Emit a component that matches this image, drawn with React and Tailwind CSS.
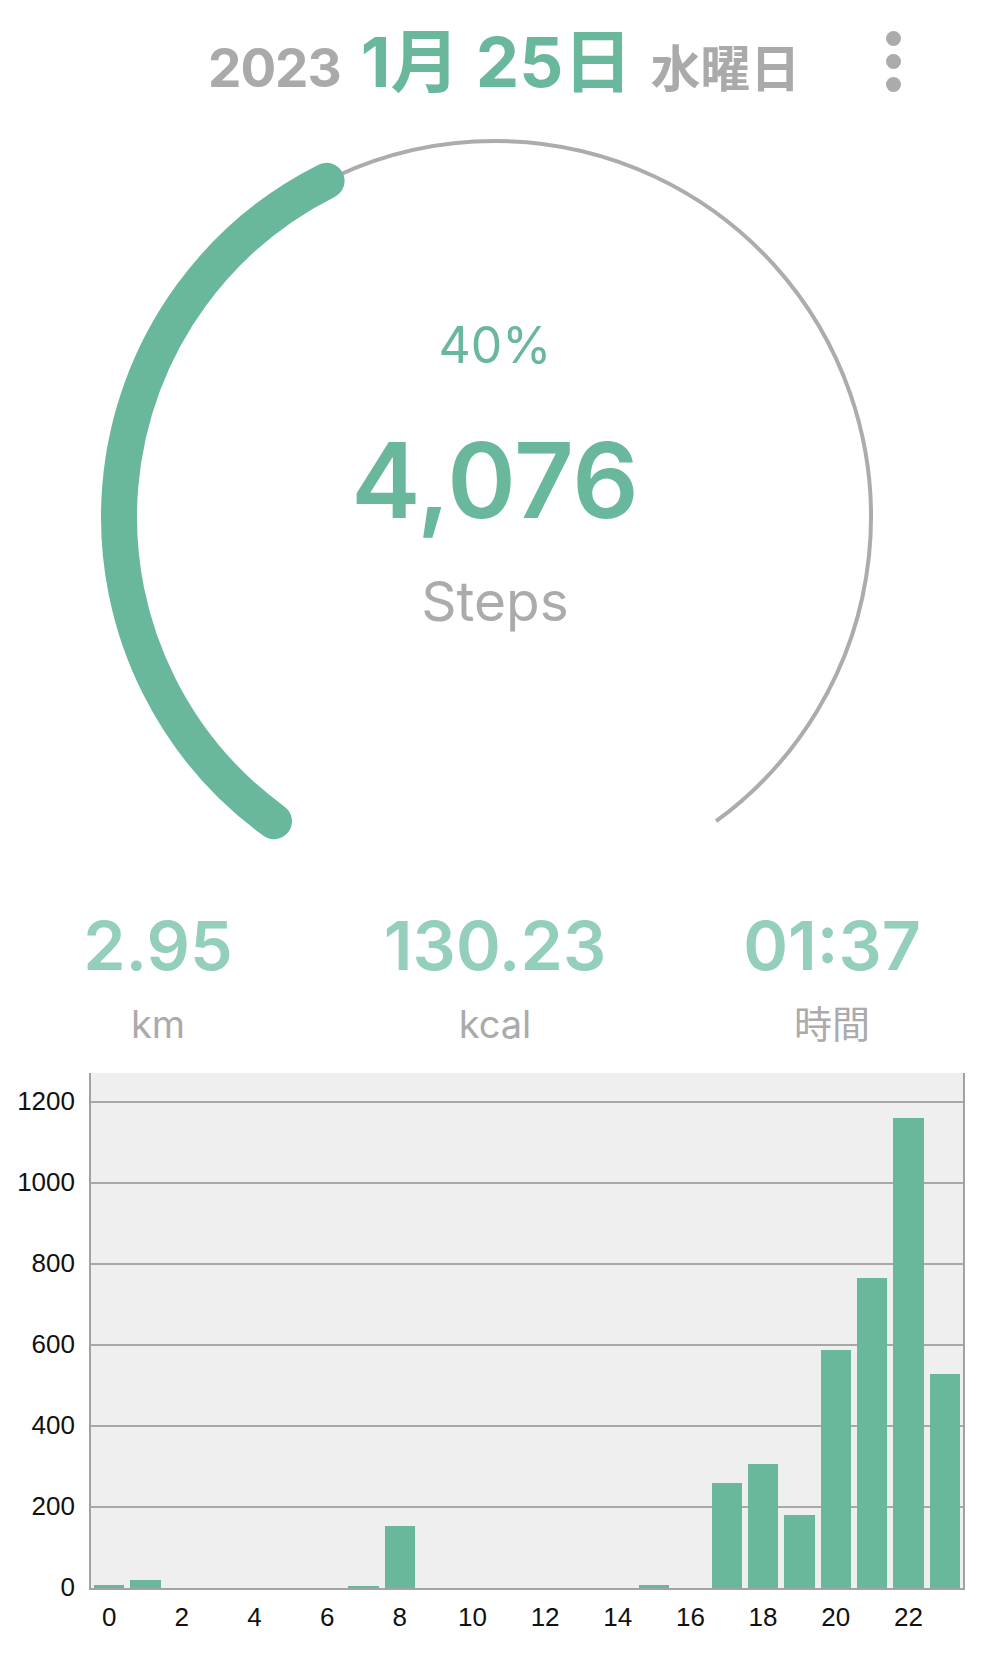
import React from "react";

const GREEN = "#69b89c";
const hourly = [8, 21, 0, 0, 0, 0, 0, 4, 154, 0, 0, 0, 0, 0, 0, 8, 0, 259, 306, 180, 589, 766, 1161, 529];
const PX_PER_STEP = 0.4048;
const PLOT_H = 515;

// point on the gauge circle, angle in degrees (y axis pointing down)
function pt(deg, r = 376, cx = 495, cy = 517) {
  const a = (deg * Math.PI) / 180;
  return [cx + r * Math.cos(a), cy + r * Math.sin(a)];
}

function Gauge({ percent }) {
  const start = 126;
  const sweep = 288;
  const [sx, sy] = pt(start);
  const [ex, ey] = pt(start + sweep);
  const [gx, gy] = pt(start + sweep * percent);
  const large = sweep * percent > 180 ? 1 : 0;
  return (
    <svg
      className="absolute inset-0"
      width="990"
      height="740"
      viewBox="0 120 990 740"
    >
      <path
        d={`M ${sx} ${sy} A 376 376 0 1 1 ${ex} ${ey}`}
        fill="none"
        stroke="#acacac"
        strokeWidth="4"
      />
      <path
        d={`M ${sx} ${sy} A 376 376 0 ${large} 1 ${gx} ${gy}`}
        fill="none"
        stroke={GREEN}
        strokeWidth="36"
        strokeLinecap="round"
      />
    </svg>
  );
}

function Stat({ value, label }) {
  return (
    <div className="w-[220px] flex flex-col items-center">
      <div className="text-[68px] leading-none font-semibold text-[#93cfba]">
        {value}
      </div>
      <div className="mt-[26px] text-[38px] leading-none text-[#ababab]">{label}</div>
    </div>
  );
}

function StepChart() {
  const ticks = [1200, 1000, 800, 600, 400, 200, 0];
  return (
    <div className="flex flex-col" style={{ fontFamily: '"Liberation Sans", Arial, sans-serif' }}>
      <div className="flex">
        <div className="relative w-[89px] h-[517px]">
          {ticks.map((t) => {
            const y = PLOT_H - t * PX_PER_STEP;
            return (
              <div
                key={t}
                className="absolute right-[14px] text-[26px] leading-none text-[#111]"
                style={{ top: y - 14 }}
              >
                {t}
              </div>
            );
          })}
        </div>
        <div className="relative w-[876px] h-[517px] bg-[#efefef] border-l-2 border-r-2 border-b-2 border-[#a3a3a3]">
          {ticks.slice(0, 6).map((t) => (
            <div
              key={t}
              className="absolute left-0 right-0 h-[2px] bg-[#a8a8a8]"
              style={{ top: PLOT_H - t * PX_PER_STEP - 1 }}
            />
          ))}
          <div className="absolute inset-0 flex items-end">
            {hourly.map((v, i) => (
              <div key={i} className="flex-1 px-[3px] flex items-end h-full">
                <div className="w-full" style={{ height: v * PX_PER_STEP, backgroundColor: GREEN }} />
              </div>
            ))}
          </div>
        </div>
      </div>
      <div className="flex ml-[91px] w-[872px] mt-[14px]">
        {hourly.map((_, i) => (
          <div key={i} className="flex-1 text-center text-[26px] leading-none text-[#111]">
            {i % 2 === 0 ? i : ""}
          </div>
        ))}
      </div>
    </div>
  );
}

export default function App() {
  return (
    <div
      className="w-[990px] h-[1655px] bg-white overflow-hidden relative"
      style={{ fontFamily: 'Inter, "Noto Sans CJK JP", sans-serif' }}
    >
      {/* date header */}
      <div className="relative h-[120px] flex items-baseline pl-[208px] pt-[28px] leading-none">
        <span className="text-[53px] font-bold text-[#aaaaaa] tracking-[-1px]">2023</span>
        <span className="ml-[20px] text-[69px] font-bold" style={{ color: GREEN }}>
          1月 25日
        </span>
        <span className="ml-[18px] text-[50px] font-semibold text-[#aaaaaa]">水曜日</span>
        <button className="absolute left-[886px] top-[31px] flex flex-col gap-[8px]">
          <span className="block w-[15px] h-[15px] rounded-full bg-[#ababab]" />
          <span className="block w-[15px] h-[15px] rounded-full bg-[#ababab]" />
          <span className="block w-[15px] h-[15px] rounded-full bg-[#ababab]" />
        </button>
      </div>

      {/* gauge */}
      <div className="relative h-[740px]">
        <Gauge percent={0.4076} />
        <div className="relative flex flex-col items-center pt-[200px]">
          <div className="text-[50px] leading-none" style={{ color: GREEN }}>
            40%
          </div>
          <div className="mt-[58px] text-[104px] leading-none font-semibold" style={{ color: GREEN }}>
            4,076
          </div>
          <div className="mt-[42px] text-[55px] leading-none text-[#ababab]">Steps</div>
        </div>
      </div>

      {/* stats */}
      <div className="h-[213px] flex justify-center gap-[117px] pt-[51px]">
        <Stat value="2.95" label="km" />
        <Stat value="130.23" label="kcal" />
        <Stat value="01:37" label="時間" />
      </div>

      <StepChart />
    </div>
  );
}
